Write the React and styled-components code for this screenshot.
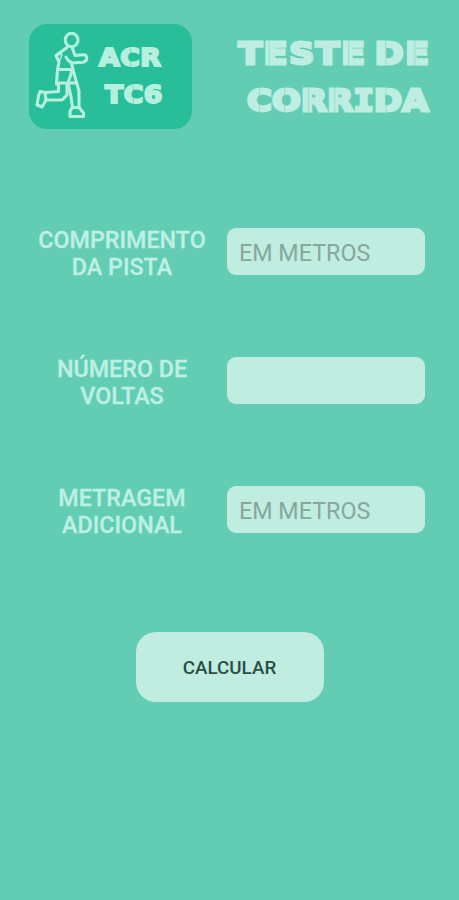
import React from 'react';
import styled, {createGlobalStyle} from 'styled-components';

const GlobalStyle = createGlobalStyle`
  * {
    box-sizing: border-box;
  }

  body {
    background: #62cdb3;
    font-family: Roboto, sans-serif;
    margin: 0;
  }
`;

const Screen = styled.main`
  background: #62cdb3;
  min-height: 900px;
  padding-top: 24px;
  width: 459px;
`;

const Header = styled.header`
  display: flex;
  height: 105px;
  justify-content: space-between;
  padding: 0 28px 0 29px;
`;

const Logo = styled.div`
  background: #28be99;
  border-radius: 18px;
  display: flex;
  height: 105px;
  padding: 4px 0 0 5px;
  width: 163px;
`;

const Runner = styled.svg`
  fill: none;
  flex: none;
  height: 94px;
  stroke: #b5f0df;
  stroke-linecap: round;
  stroke-linejoin: round;
  stroke-width: 3.1;
  width: 56px;
`;

const Display = styled.span`
  -webkit-text-stroke: ${({$stroke}) => $stroke}px currentColor;
  display: block;
  font-family: 'DejaVu Sans', sans-serif;
  font-size: ${({$size}) => $size}px;
  font-weight: 700;
  letter-spacing: ${({$spacing}) => $spacing}px;
  position: relative;
  transform: scaleX(${({$stretch}) => $stretch});
  transform-origin: ${({$origin}) => $origin || 'right'};
  white-space: nowrap;
  word-spacing: -5px;

  /* stencil cuts through the letters */
  &::after {
    background-image: ${({$cuts}) => $cuts.map(() => 'linear-gradient(currentColor, currentColor)').join(', ')};
    background-position: ${({$cuts}) => $cuts.map((x) => `right ${x}px top 0`).join(', ')};
    background-repeat: no-repeat;
    background-size: 1px 100%;
    color: ${({$cutColor}) => $cutColor};
    content: '';
    inset: 8px 0;
    opacity: 0.4;
    position: absolute;
  }
`;

const LogoText = styled.div`
  color: #b5f0df;
  line-height: 37px;
  padding: 12px 0 0 9px;
  width: 74px;
`;

const LogoLine = styled(Display)`
  margin-left: ${({$indent}) => $indent || 0}px;
`;

const Title = styled.h1`
  color: #bdeee1;
  line-height: 47px;
  margin: 0;
  padding-top: 6px;
  text-align: right;
`;

const TitleLine = styled(Display)`
  margin-right: ${({$inset}) => $inset || 0}px;
`;

const SlabLetter = styled.span`
  font-family: 'DejaVu Sans Mono', monospace;
`;

const Form = styled.form`
  display: flex;
  flex-direction: column;
  padding-top: 98px;
`;

const Row = styled.label`
  align-items: flex-start;
  display: flex;
  height: 54px;
  margin-bottom: 75px;
  padding-left: 27px;
`;

const Label = styled.span`
  -webkit-text-stroke: 0.3px currentColor;
  color: #bdf0e3;
  font-size: 23.3px;
  font-weight: 500;
  line-height: 27px;
  text-align: center;
  white-space: pre-line;
  width: 190px;
`;

const Field = styled.input`
  background: #c1ece0;
  border: 0;
  border-radius: 9px;
  color: #47665e;
  font: 400 23.3px Roboto, sans-serif;
  height: 47px;
  margin: 1px 0 0 10px;
  outline: 0;
  padding: 3px 12px 0;
  width: 198px;

  &::placeholder {
    color: #86a79e;
    opacity: 1;
  }
`;

const Button = styled.button`
  align-self: center;
  background: #c1ece0;
  border: 0;
  border-radius: 20px;
  color: #294f46;
  font: 500 18.8px Roboto, sans-serif;
  height: 70px;
  margin-top: 18px;
  padding: 2px 0 0;
  width: 188px;
`;

const fields = [
  {name: 'comprimento', label: 'COMPRIMENTO\nDA PISTA', placeholder: 'EM METROS'},
  {name: 'voltas', label: 'NÚMERO DE\nVOLTAS', placeholder: ''},
  {name: 'adicional', label: 'METRAGEM\nADICIONAL', placeholder: 'EM METROS'}
];

const RunnerIcon = () => (
  <Runner viewBox="0 0 56 94" aria-hidden="true">
    <ellipse cx="37.6" cy="12" rx="6.4" ry="6.8" />
    <path d="M33 19.5 22 27.5 25 34 23.5 41.5 22.5 56" />
    <path d="M22 27.5 27.5 26 M25 34 28 27" strokeWidth="1.5" />
    <path d="M38.5 20.5 41 27.5 49 26.7C54 26.5 54 33.5 49 34.2L38 35C35 33.5 33 31.5 32 29" />
    <path d="M37.5 35 39 42 45 63V79.5" />
    <path d="M23.5 41.5H39M22.5 55H42M38 43 34 55" />
    <path d="M24.5 56V63.5L11 64.5 6 63.5 4.5 68 3 77 8 79 12 72H28L33 67V56" />
    <path d="M11 64.5 12 72" />
    <path d="M34.5 57 37 69 38.5 79.5H45" />
    <path d="M38.5 79.5 36 83V88.5H49.5V85L45 79.5" />
  </Runner>
);

const App = () => (
  <>
    <GlobalStyle />
    <Screen>
      <Header>
        <Logo>
          <RunnerIcon />
          <LogoText>
            <LogoLine $size={24} $spacing={0.5} $stroke={2} $stretch={1.11} $origin="left" $cuts={[36]} $cutColor="#28be99">
              ACR
            </LogoLine>
            <LogoLine
              $size={24}
              $spacing={0.5}
              $stroke={2}
              $stretch={1.11}
              $origin="left"
              $indent={6}
              $cuts={[33]}
              $cutColor="#28be99"
            >
              TC6
            </LogoLine>
          </LogoText>
        </Logo>
        <Title>
          <TitleLine $size={31} $spacing={1.5} $stroke={2.8} $stretch={1.12} $cuts={[14, 40, 73, 144]} $cutColor="#62cdb3">
            TESTE DE
          </TitleLine>
          <TitleLine
            $size={31}
            $spacing={0.2}
            $stroke={2.8}
            $stretch={1.09}
            $inset={2}
            $cuts={[39, 86, 110, 132, 155]}
            $cutColor="#62cdb3"
          >
            CORR<SlabLetter>I</SlabLetter>DA
          </TitleLine>
        </Title>
      </Header>
      <Form onSubmit={(event) => event.preventDefault()}>
        {fields.map(({name, label, placeholder}) => (
          <Row key={name}>
            <Label>{label}</Label>
            <Field name={name} placeholder={placeholder} />
          </Row>
        ))}
        <Button type="submit">CALCULAR</Button>
      </Form>
    </Screen>
  </>
);

export default App;
